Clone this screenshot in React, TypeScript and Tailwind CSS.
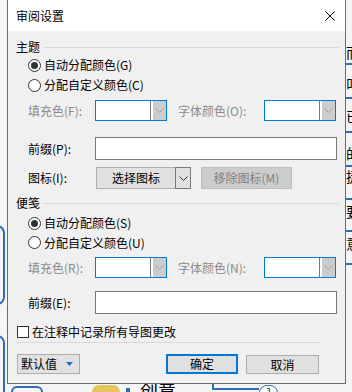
import React from "react";

const Chevron = ({ color = "#a0a0a0" }: { color?: string }) => (
  <svg width="9" height="5" viewBox="0 0 9 5">
    <polyline points="0.5,0.5 4.5,4.5 8.5,0.5" fill="none" stroke={color} strokeWidth="1" />
  </svg>
);

const Radio = ({ checked, label, h }: { checked?: boolean; label: string; h: string }) => (
  <div className={`flex items-center ml-[12px] ${h}`}>
    <span className="w-[13px] h-[13px] rounded-full border border-[#333333] bg-white flex items-center justify-center">
      {checked && <span className="w-[7px] h-[7px] rounded-full bg-[#333333]" />}
    </span>
    <span className="ml-[3px] text-[12px] leading-[16px] text-black">{label}</span>
  </div>
);

const GroupHeader = ({ label, mt }: { label: string; mt: string }) => (
  <div className={`flex items-center h-[16px] ${mt}`}>
    <span className="text-[12px] leading-[16px] text-black">{label}</span>
    <span className="flex-1 ml-[3px] mr-[6px] border-t border-[#d9d9d9]" />
  </div>
);

const ColorCombo = () => (
  <div className="w-[72px] h-[21px] border border-[#0078d7] bg-white flex">
    <div className="w-[55px] h-full bg-white border-r border-[#7a7a7a]" />
    <div className="w-[2px] h-full bg-white" />
    <div className="flex-1 h-full bg-[#cccccc] flex items-center justify-center">
      <Chevron />
    </div>
  </div>
);

const ColorRow = ({ fill, font }: { fill: string; font: string }) => (
  <div className="flex items-center h-[21px] mt-[5px]">
    <span className="ml-[12px] w-[67px] text-[12px] leading-[16px] text-[#8a8a8a]">{fill}</span>
    <ColorCombo />
    <span className="ml-[11px] w-[86px] text-[12px] leading-[16px] text-[#8a8a8a]">{font}</span>
    <ColorCombo />
  </div>
);

const PrefixRow = ({ label, mt }: { label: string; mt: string }) => (
  <div className={`flex items-center h-[23px] ${mt}`}>
    <span className="ml-[12px] w-[67px] text-[12px] leading-[16px] text-black">{label}</span>
    <div className="w-[242px] h-[23px] border border-[#7a7a7a] bg-white" />
  </div>
);

export default function App() {
  return (
    <div className="relative w-[352px] h-[392px] overflow-hidden bg-[#f5f5f5] font-['Noto_Sans_CJK_SC','Noto_Sans',sans-serif]">
      {/* background app canvas (under the dialog) */}
      <div className="absolute left-[346px] top-[44px] text-[14px] leading-[16px] text-black">而</div>
      <div className="absolute left-[346px] top-[76px] text-[14px] leading-[16px] text-black">叫</div>
      <div className="absolute left-[346px] top-[108px] text-[14px] leading-[16px] text-black">已</div>
      <div className="absolute left-[346px] top-[145px] text-[14px] leading-[16px] text-black">的</div>
      <div className="absolute left-[346px] top-[168px] text-[14px] leading-[16px] text-black">捷</div>
      <div className="absolute left-[346px] top-[203px] text-[14px] leading-[16px] text-black">要</div>
      <div className="absolute left-[346px] top-[235px] text-[14px] leading-[16px] text-black">意</div>
      <div className="absolute left-[345px] top-[63px] w-[10px] h-[2px] bg-[#2f6db5]" />
      <div className="absolute left-[345px] top-[97px] w-[10px] h-[2px] bg-[#2f6db5]" />
      <div className="absolute left-[345px] top-[131px] w-[10px] h-[2px] bg-[#2f6db5]" />
      <div className="absolute left-[345px] top-[165px] w-[10px] h-[2px] bg-[#2f6db5]" />
      <div className="absolute left-[345px] top-[198px] w-[10px] h-[2px] bg-[#2f6db5]" />
      <div className="absolute left-[345px] top-[230px] w-[10px] h-[2px] bg-[#2f6db5]" />
      <div className="absolute left-[345px] top-[263px] w-[10px] h-[2px] bg-[#2f6db5]" />
      <div className="absolute left-[-20px] top-[225px] w-[25px] h-[80px] border-2 border-[#2f6db5] rounded-[8px]" />
      <div className="absolute left-[-20px] top-[335px] w-[25px] h-[80px] border-2 border-[#2f6db5] rounded-[8px]" />
      <div className="absolute left-[11px] top-[386px] w-[32px] h-[14px] border-2 border-[#2f6db5] rounded-[6px]" />
      <div className="absolute left-[92px] top-[385px] w-[28px] h-[14px] rounded-full bg-[#e7c45c]" />
      <div className="absolute left-[126px] top-[388px] w-[4px] h-[4px] bg-[#2f6db5]" />
      <div className="absolute left-[140px] top-[379px] text-[18px] leading-[22px] text-black">创意</div>
      <div className="absolute left-[212px] top-[384px] w-[47px] h-[6px] border-l-2 border-b-2 border-[#2f6db5]" />
      <div className="absolute left-[259px] top-[385px] w-[19px] h-[16px] rounded-full border border-[#2f6db5] bg-white flex justify-center text-[8px] leading-[10px] text-black">3</div>

      {/* dialog window */}
      <div className="absolute left-[7px] top-[-1px] w-[339px] h-[385px] border border-[#6e6e6e] bg-[#f0f0f0] flex flex-col">
        <div className="h-[31px] bg-white flex items-center justify-between">
          <span className="ml-[8px] text-[12px] leading-[16px] text-black">审阅设置</span>
          <svg width="10" height="10" viewBox="0 0 10 10" className="mr-[10px]">
            <line x1="0.5" y1="0.5" x2="9.5" y2="9.5" stroke="#000" strokeWidth="1" />
            <line x1="9.5" y1="0.5" x2="0.5" y2="9.5" stroke="#000" strokeWidth="1" />
          </svg>
        </div>

        <div className="flex flex-col pl-[8px]">
          <GroupHeader label="主题" mt="mt-[8px]" />
          <Radio checked label="自动分配颜色(G)" h="h-[20px]" />
          <Radio label="分配自定义颜色(C)" h="h-[20px]" />
          <ColorRow fill="填充色(F):" font="字体颜色(O):" />
          <PrefixRow label="前缀(P):" mt="mt-[16px]" />

          <div className="flex items-center h-[22px] mt-[7px]">
            <span className="ml-[12px] w-[68px] text-[12px] leading-[16px] text-black">图标(I):</span>
            <div className="w-[95px] h-[22px] flex">
              <div className="flex-1 h-full bg-[#e1e1e1] border border-[#adadad] flex items-center justify-center text-[12px] leading-[16px] text-black">
                选择图标
              </div>
              <div className="w-[16px] h-full ml-[-1px] bg-[#e1e1e1] border border-[#7a7a7a] flex items-center justify-center">
                <Chevron color="#333333" />
              </div>
            </div>
            <div className="ml-[10px] w-[91px] h-[22px] bg-[#cccccc] border border-[#bfbfbf] flex items-center justify-center text-[12px] leading-[16px] text-[#838383]">
              移除图标(M)
            </div>
          </div>

          <GroupHeader label="便笺" mt="mt-[6px]" />
          <div className="mt-[2px]" />
          <Radio checked label="自动分配颜色(S)" h="h-[20px]" />
          <Radio label="分配自定义颜色(U)" h="h-[19px]" />
          <ColorRow fill="填充色(R):" font="字体颜色(N):" />
          <PrefixRow label="前缀(E):" mt="mt-[13px]" />

          <div className="flex items-center h-[16px] mt-[10px]">
            <span className="ml-[1px] w-[12px] h-[12px] border border-[#333333] bg-white" />
            <span className="ml-[3px] text-[12px] leading-[16px] text-black">在注释中记录所有导图更改</span>
          </div>

          <div className="mt-[2px] w-[304px] border-t border-[#d9d9d9]" />

          <div className="flex items-start mt-[11px]">
            <div className="ml-[1px] w-[63px] h-[20px] bg-[#e1e1e1] border border-[#adadad] flex items-center">
              <span className="ml-[3px] text-[12px] leading-[16px] text-black">默认值</span>
              <svg width="7" height="4" viewBox="0 0 7 4" className="ml-[9px]">
                <polygon points="0,0 7,0 3.5,4" fill="#1f6fd1" />
              </svg>
            </div>
            <div className="ml-[86px] w-[72px] h-[20px] bg-[#e1e1e1] border-2 border-[#0078d7] flex items-center justify-center text-[12px] leading-[16px] text-black">
              确定
            </div>
            <div className="ml-[8px] w-[73px] h-[19px] mt-[1px] bg-[#e1e1e1] border border-[#adadad] flex items-center justify-center text-[12px] leading-[16px] text-black">
              取消
            </div>
          </div>
        </div>
      </div>
    </div>
  );
}
